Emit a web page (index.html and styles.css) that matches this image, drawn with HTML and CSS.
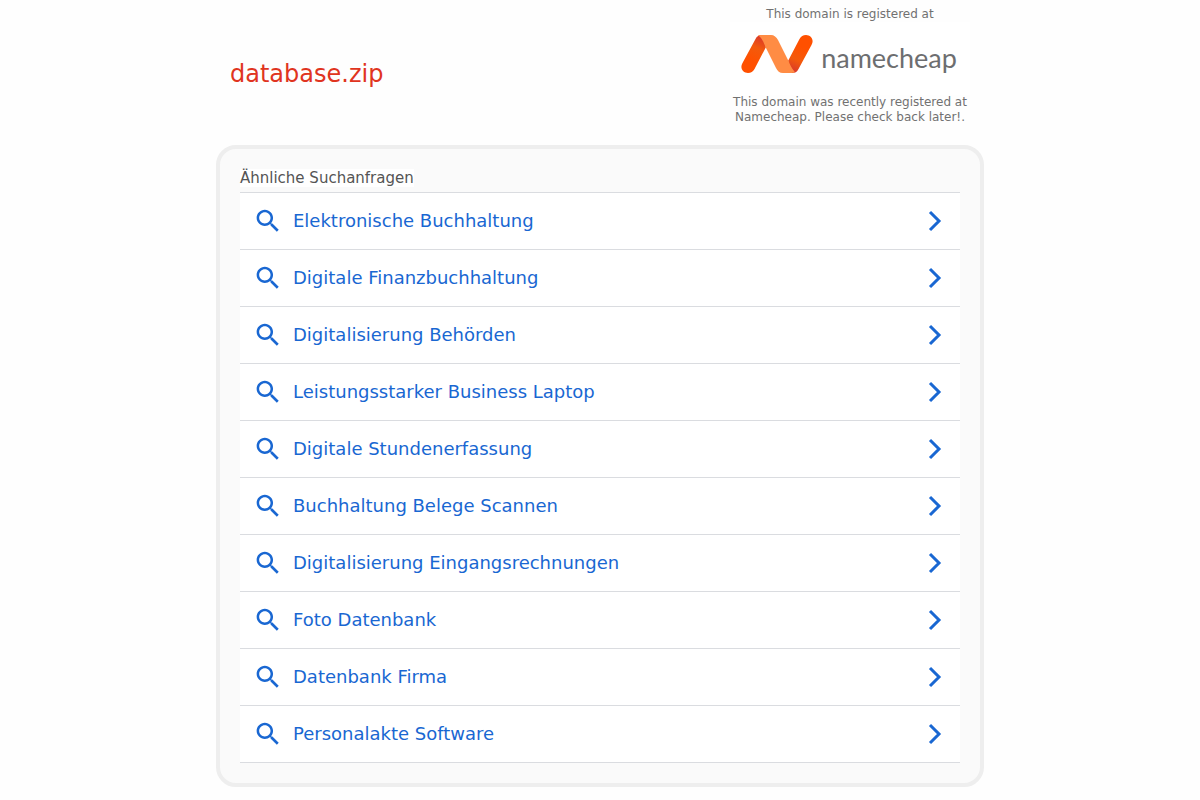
FILE: index.html
```html
<!DOCTYPE html>
<html lang="de">
<head>
<meta charset="utf-8">
<meta name="viewport" content="width=device-width, initial-scale=1">
<title>database.zip</title>
<link rel="stylesheet" href="styles.css">
</head>
<body>
<svg class="defs" width="0" height="0" aria-hidden="true">
  <symbol id="search" viewBox="2.5 2.5 19 19"><path d="M15.500 14h-.79l-.28-.27C15.410 12.590 16 11.110 16 9.500 16 5.910 13.090 3 9.500 3S3 5.910 3 9.500 5.910 16 9.500 16c1.610 0 3.090-.59 4.230-1.570l.27.28v.79l5 4.990L20.490 19l-4.990-5zm-6 0C7.010 14 5 11.990 5 9.500S7.010 5 9.500 5 14 7.010 14 9.500 11.990 14 9.500 14z" fill="currentColor"/></symbol>
  <symbol id="chevron" viewBox="0 0 14 22"><path d="M2 2l9 9-9 9" fill="none" stroke="currentColor" stroke-width="3"/></symbol>
</svg>
<div class="page">
  <header class="header">
    <h1 class="domain">database.zip</h1>
    <div class="registrar">
      <p class="note">This domain is registered at</p>
      <a class="logo" href="#" aria-label="namecheap">
        <svg class="mark" viewBox="0 0 72 40" aria-hidden="true">
          <defs>
            <linearGradient id="left" gradientUnits="userSpaceOnUse" x1="21" y1="3" x2="6" y2="34"><stop offset="0" stop-color="#d9382b"/><stop offset=".35" stop-color="#f35a0c"/><stop offset=".75" stop-color="#ff5000"/></linearGradient>
            <linearGradient id="right" gradientUnits="userSpaceOnUse" x1="51" y1="37" x2="66" y2="6"><stop offset="0" stop-color="#d9382b"/><stop offset=".35" stop-color="#f35a0c"/><stop offset=".75" stop-color="#ff5000"/></linearGradient>
          </defs>
          <path d="M21 1C18 1 16 2 14.500 5L1.500 29C-1.500 34 2 39 7 39C10 39 12 37.500 13.500 35L25 13Z" fill="url(#left)"/>
          <path d="M51 39C54 39 56 38 57.500 35L70.500 11C73.500 6 70 1 65 1C62 1 60 2.500 58.500 5L47 27Z" fill="url(#right)"/>
          <path d="M19 1H30C33 1 35.500 3 37 6L47.500 27C49 31 50.500 34 54 38.300C53 39 51 39 49 39H42C38.500 39 36.500 37 35 34L24.500 13C22 7 20.500 3 17 1.400C17.700 1 18.300 1 19 1Z" fill="#ff8c44"/>
        </svg>
        <span class="wordmark">namecheap</span>
      </a>
      <p class="note">This domain was recently registered at Namecheap. Please check back later!.</p>
    </div>
  </header>
  <main class="panel">
    <h2 class="heading"><span class="heading-text">Ähnliche Suchanfragen</span></h2>
    <ul class="list">
      <li class="item"><a class="link" href="#"><svg class="search"><use href="#search"/></svg><span class="label">Elektronische Buchhaltung</span><svg class="chevron"><use href="#chevron"/></svg></a></li>
      <li class="item"><a class="link" href="#"><svg class="search"><use href="#search"/></svg><span class="label">Digitale Finanzbuchhaltung</span><svg class="chevron"><use href="#chevron"/></svg></a></li>
      <li class="item"><a class="link" href="#"><svg class="search"><use href="#search"/></svg><span class="label">Digitalisierung Behörden</span><svg class="chevron"><use href="#chevron"/></svg></a></li>
      <li class="item"><a class="link" href="#"><svg class="search"><use href="#search"/></svg><span class="label">Leistungsstarker Business Laptop</span><svg class="chevron"><use href="#chevron"/></svg></a></li>
      <li class="item"><a class="link" href="#"><svg class="search"><use href="#search"/></svg><span class="label">Digitale Stundenerfassung</span><svg class="chevron"><use href="#chevron"/></svg></a></li>
      <li class="item"><a class="link" href="#"><svg class="search"><use href="#search"/></svg><span class="label">Buchhaltung Belege Scannen</span><svg class="chevron"><use href="#chevron"/></svg></a></li>
      <li class="item"><a class="link" href="#"><svg class="search"><use href="#search"/></svg><span class="label">Digitalisierung Eingangsrechnungen</span><svg class="chevron"><use href="#chevron"/></svg></a></li>
      <li class="item"><a class="link" href="#"><svg class="search"><use href="#search"/></svg><span class="label">Foto Datenbank</span><svg class="chevron"><use href="#chevron"/></svg></a></li>
      <li class="item"><a class="link" href="#"><svg class="search"><use href="#search"/></svg><span class="label">Datenbank Firma</span><svg class="chevron"><use href="#chevron"/></svg></a></li>
      <li class="item"><a class="link" href="#"><svg class="search"><use href="#search"/></svg><span class="label">Personalakte Software</span><svg class="chevron"><use href="#chevron"/></svg></a></li>
    </ul>
  </main>
</div>
</body>
</html>
```
FILE: styles.css
```css
* {
  box-sizing: border-box;
}

body {
  margin: 0;
  background: #fefefe;
  font-family: "DejaVu Sans", Verdana, sans-serif;
}

h1,
h2,
p,
ul {
  margin: 0;
  padding: 0;
  font-weight: 400;
}

.defs {
  position: absolute;
}

.page {
  width: 100%;
  max-width: 768px;
  margin: 0 auto;
  padding-bottom: 12px;
}

.header {
  display: flex;
  align-items: center;
  justify-content: space-between;
  padding: 7px 14px 20px;
}

.domain {
  padding-top: 16px;
  font-size: 24px;
  line-height: 28px;
  color: #e03420;
}

.registrar {
  width: 240px;
  text-align: center;
}

.note {
  font-size: 12px;
  line-height: 15px;
  color: #717171;
}

.logo {
  display: flex;
  align-items: center;
  justify-content: center;
  gap: 8px;
  padding: 12px 2px 21px 0;
  background: #fff;
  color: #6d6e70;
  text-decoration: none;
}

.mark {
  width: 72px;
  height: 40px;
}

.wordmark {
  padding-top: 8px;
  font-family: Lato, sans-serif;
  font-size: 27px;
  line-height: 32px;
}

.panel {
  padding: 20px;
  border: 4px solid #eee;
  border-radius: 20px;
  background: #fafafa;
}

.heading {
  padding-bottom: 5px;
  font-size: 15px;
  line-height: 18px;
  color: #555;
}

.heading-text {
  background: #fff;
}

.list {
  list-style: none;
  border-bottom: 1px solid #dadce0;
  background: #fff;
}

.item {
  border-top: 1px solid #dadce0;
}

.link {
  display: flex;
  align-items: center;
  min-height: 56px;
  padding: 0 18px 0 16px;
  font-size: 18px;
  line-height: 22px;
  color: #1967d2;
  text-decoration: none;
}

.search {
  flex: none;
  width: 24px;
  height: 24px;
}

.label {
  flex: 1;
  padding-left: 13px;
}

.chevron {
  flex: none;
  width: 14px;
  height: 22px;
}
```
